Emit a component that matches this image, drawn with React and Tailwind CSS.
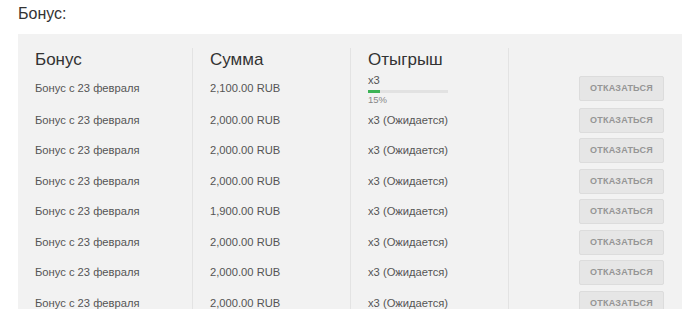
import React from "react";

const rows = [
  { name: "Бонус с 23 февраля", sum: "2,100.00 RUB", first: true },
  { name: "Бонус с 23 февраля", sum: "2,000.00 RUB" },
  { name: "Бонус с 23 февраля", sum: "2,000.00 RUB" },
  { name: "Бонус с 23 февраля", sum: "2,000.00 RUB" },
  { name: "Бонус с 23 февраля", sum: "1,900.00 RUB" },
  { name: "Бонус с 23 февраля", sum: "2,000.00 RUB" },
  { name: "Бонус с 23 февраля", sum: "2,000.00 RUB" },
  { name: "Бонус с 23 февраля", sum: "2,000.00 RUB" },
];

function Btn() {
  return (
    <button className="w-[85px] h-[25px] bg-[#e6e6e6] border border-[#dcdcdc] rounded-[2px] text-[9px] font-bold text-[#959595] tracking-[0.2px] uppercase">
      Отказаться
    </button>
  );
}

export default function App() {
  return (
    <div className="w-[700px] h-[309px] overflow-hidden bg-white font-['Liberation_Sans',Arial,sans-serif]">
      <div className="pl-[18px] pt-[3px] h-[34px] text-[16px] leading-[22px] text-[#333]">Бонус:</div>
      <div className="ml-[18px] w-[664px] bg-[#f2f2f2] pt-[14px] pb-4">
        <div className="grid grid-cols-[174px_158px_158px_174px]">
          <div className="h-[24px] pl-[17px] text-[17px] leading-[24px] text-[#333]">Бонус</div>
          <div className="h-[24px] pl-[17px] text-[17px] leading-[24px] text-[#333] border-l border-[#e3e3e3]">Сумма</div>
          <div className="h-[24px] pl-[17px] text-[17px] leading-[24px] text-[#333] border-l border-[#e3e3e3]">Отыгрыш</div>
          <div className="h-[24px] border-l border-[#e3e3e3]"></div>
          {rows.map((r, i) => (
            <React.Fragment key={i}>
              <div className={`${r.first ? "h-[33px]" : "h-[30.5px]"} pl-[17px] flex items-center text-[11.2px] text-[#555]`}>{r.name}</div>
              <div className={`${r.first ? "h-[33px]" : "h-[30.5px]"} pl-[17px] flex items-center text-[11.2px] text-[#555] border-l border-[#e3e3e3]`}>{r.sum}</div>
              <div className={`${r.first ? "h-[33px]" : "h-[30.5px]"} pl-[17px] flex items-center text-[11.2px] text-[#555] border-l border-[#e3e3e3]`}>
                {r.first ? (
                  <div className="flex flex-col w-[80px] pt-[2px]">
                    <div className="text-[11.2px] leading-[13px] text-[#555]">x3</div>
                    <div className="mt-[3px] h-[3px] w-[80px] bg-[#e2e2e2]">
                      <div className="h-[3px] w-[12px] bg-[#3cb356]"></div>
                    </div>
                    <div className="mt-[1px] text-[9.5px] leading-[11px] text-[#888]">15%</div>
                  </div>
                ) : (
                  "x3 (Ожидается)"
                )}
              </div>
              <div className={`${r.first ? "h-[33px]" : "h-[30.5px]"} pr-[18px] flex items-center justify-end border-l border-[#e3e3e3]`}>
                <Btn />
              </div>
            </React.Fragment>
          ))}
        </div>
      </div>
    </div>
  );
}
